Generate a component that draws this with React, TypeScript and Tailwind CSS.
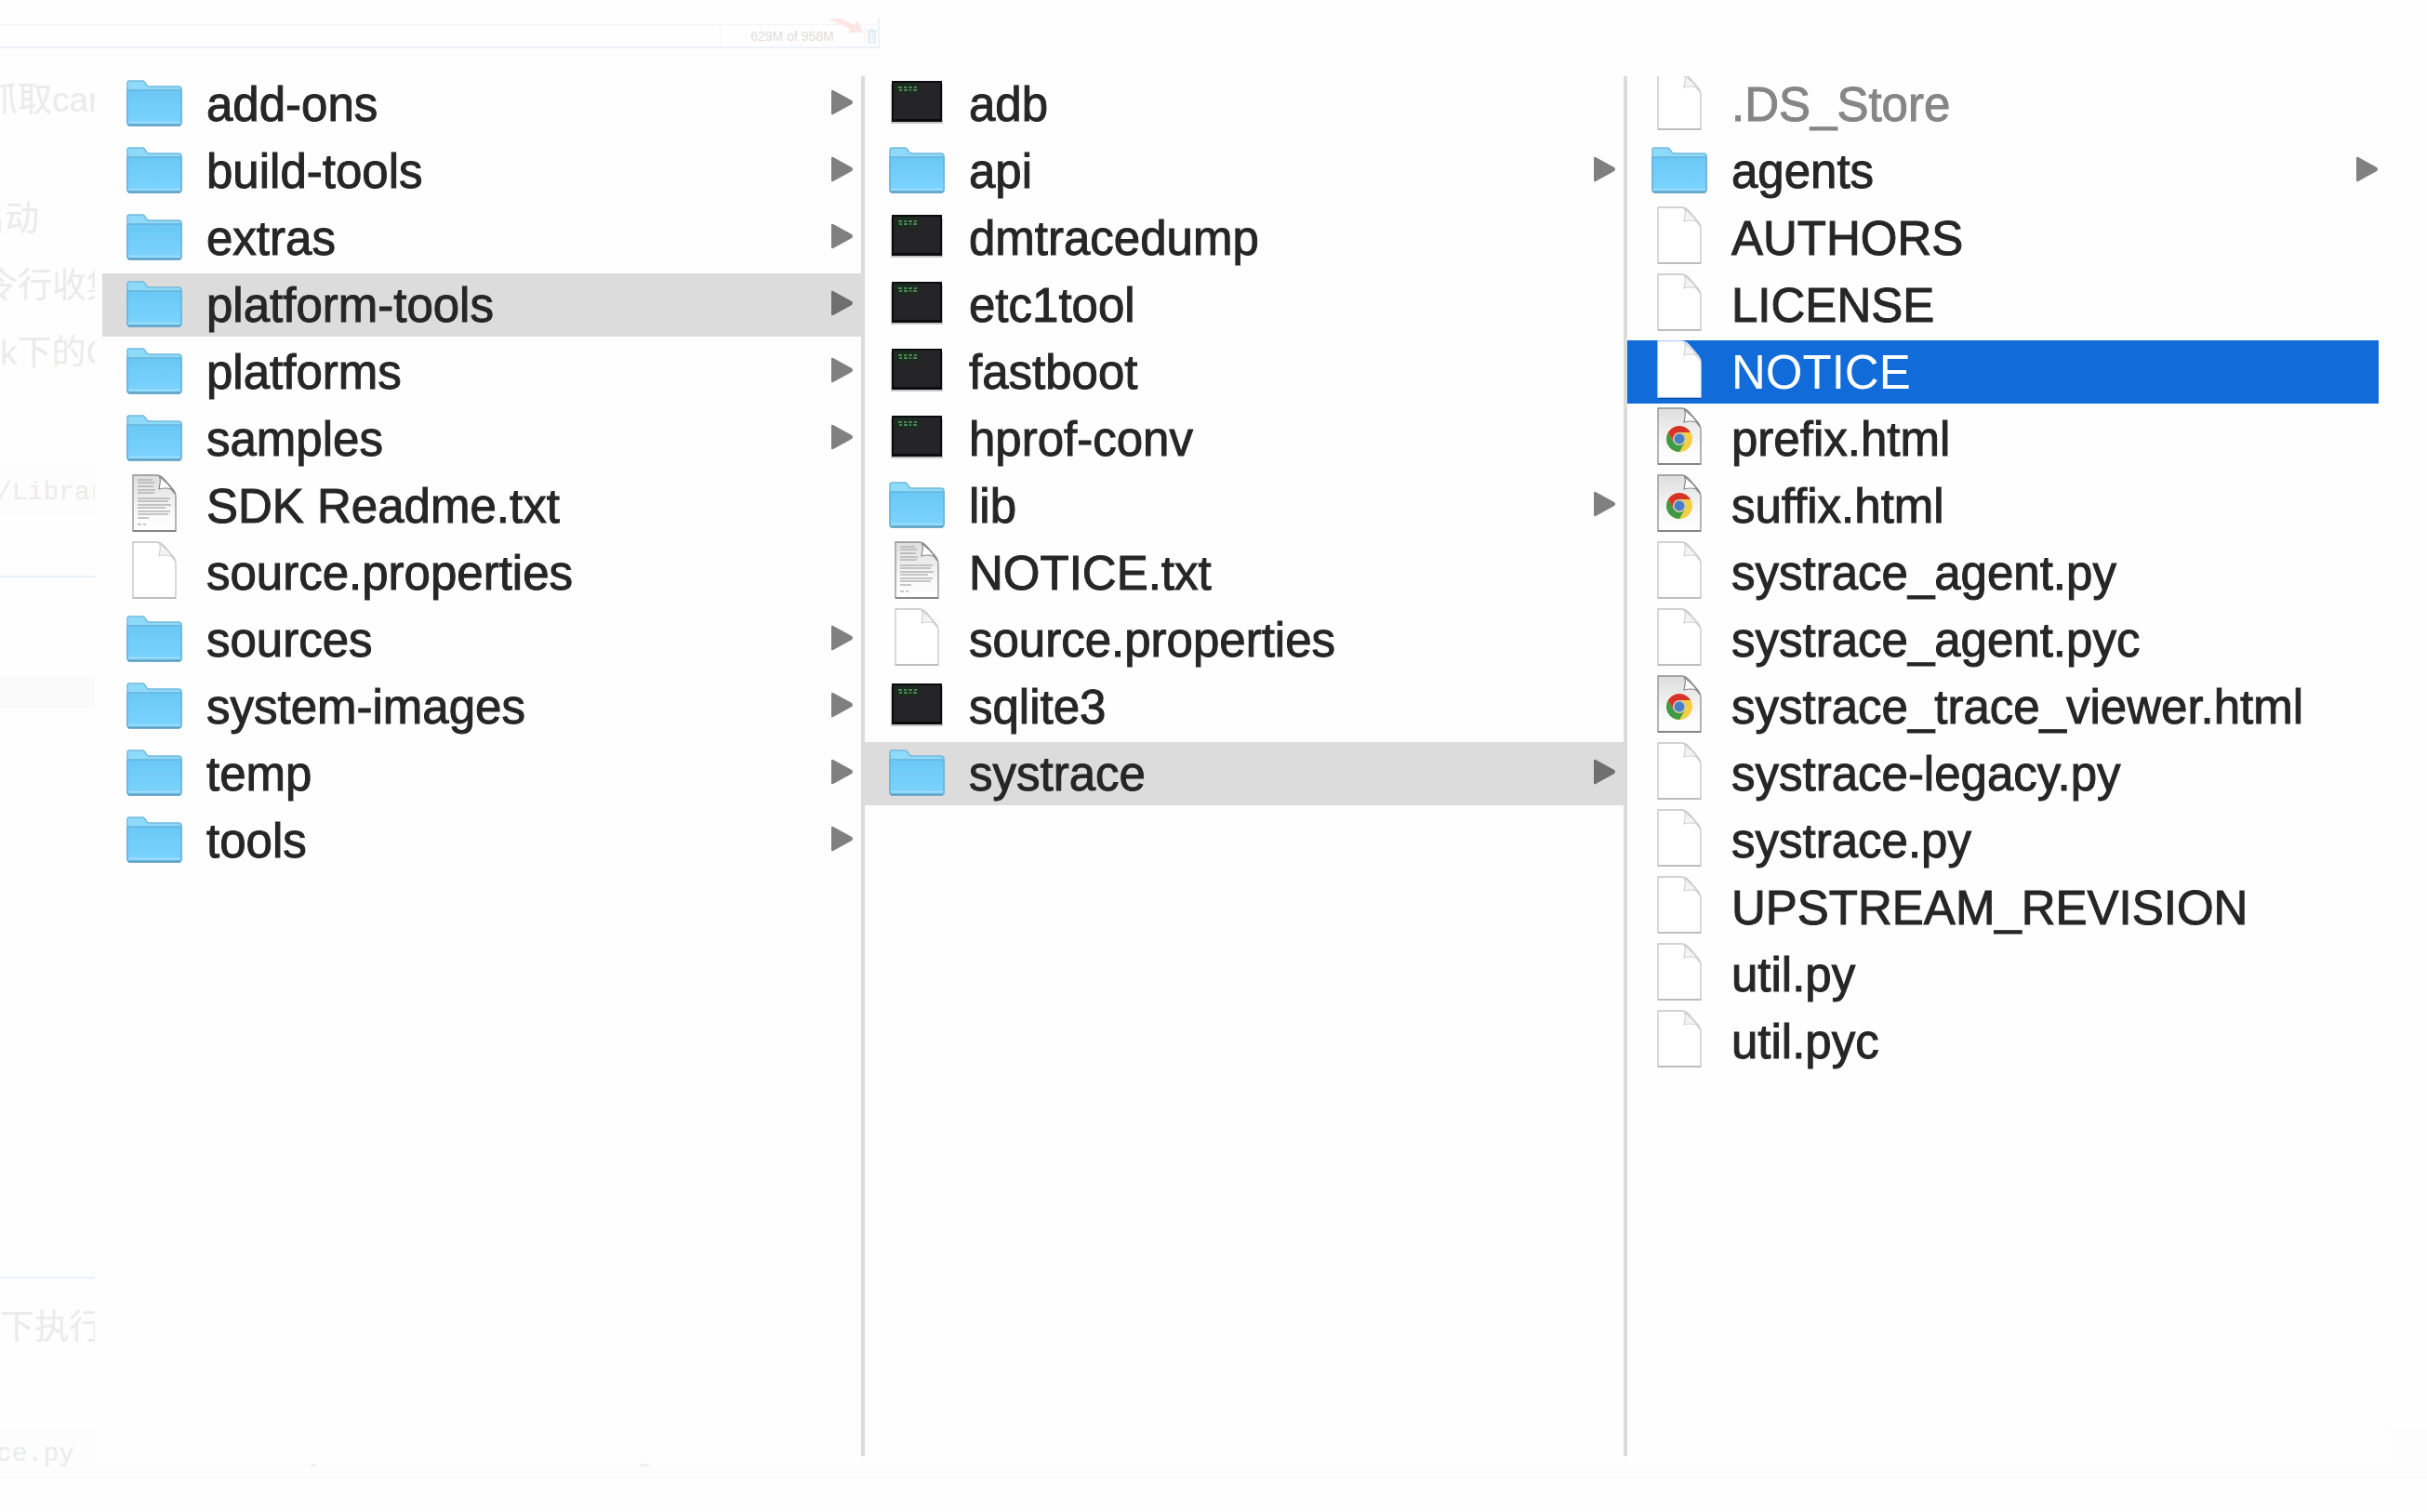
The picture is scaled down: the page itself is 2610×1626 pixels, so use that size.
import React, { useState } from "react";

type Kind = "folder" | "exec" | "doc" | "text" | "chrome";
type Entry = { name: string; kind: Kind; dim?: boolean };

const f = (name: string): Entry => ({ name, kind: "folder" });
const x = (name: string): Entry => ({ name, kind: "exec" });
const d = (name: string): Entry => ({ name, kind: "doc" });
const t = (name: string): Entry => ({ name, kind: "text" });
const h = (name: string): Entry => ({ name, kind: "chrome" });

const sdk: Entry[] = [
  f("add-ons"), f("build-tools"), f("extras"), f("platform-tools"), f("platforms"), f("samples"),
  t("SDK Readme.txt"), d("source.properties"), f("sources"), f("system-images"), f("temp"), f("tools"),
];
const platformTools: Entry[] = [
  x("adb"), f("api"), x("dmtracedump"), x("etc1tool"), x("fastboot"), x("hprof-conv"),
  f("lib"), t("NOTICE.txt"), d("source.properties"), x("sqlite3"), f("systrace"),
];
const systrace: Entry[] = [
  { name: ".DS_Store", kind: "doc", dim: true },
  f("agents"), d("AUTHORS"), d("LICENSE"), d("NOTICE"), h("prefix.html"), h("suffix.html"),
  d("systrace_agent.py"), d("systrace_agent.pyc"), h("systrace_trace_viewer.html"),
  d("systrace-legacy.py"), d("systrace.py"), d("UPSTREAM_REVISION"), d("util.py"), d("util.pyc"),
];

function FolderIcon() {
  return (
    <svg viewBox="0 0 60 68" className="h-[68px] w-[60px] shrink-0" aria-hidden="true">
      <defs>
        <linearGradient id="folder" x1="0" y1="0" x2="0" y2="1">
          <stop offset="0" stopColor="#6ac8f6" />
          <stop offset="1" stopColor="#7dd3fe" />
        </linearGradient>
      </defs>
      <path d="M1 54V11q0-2 2-2h14q2 0 3 2l2 3q1 1 3 1h31q3 0 3 3v36z" fill="#8ddafb" stroke="#74b9dc" strokeWidth="1.5" />
      <path d="M1 19h58v35q0 3-3 3H4q-3 0-3-3z" fill="url(#folder)" stroke="#69b2d8" strokeWidth="1.5" />
      <path d="M2 53.5h56" stroke="#a3e0fc" strokeWidth="1.5" />
      <path d="M2 56.5h56" stroke="#5f9dbd" strokeWidth="2" />
    </svg>
  );
}

function ExecIcon() {
  return (
    <svg viewBox="0 0 60 68" className="h-[68px] w-[60px] shrink-0" aria-hidden="true">
      <rect x="2" y="12" width="56" height="43" rx="1" fill="#000" opacity=".22" />
      <rect x="3" y="9" width="54" height="44" fill="#0c0c0e" />
      <rect x="5" y="11" width="50" height="39" fill="#252527" />
      <path d="M7 11h24v12H7z" fill="#1c2b1f" />
      <path d="M10 16h4M16 16h3M21 16h4M27 16h3M11 19h3M16 19h4M22 19h2M26 19h4" stroke="#4d8457" strokeWidth="2" />
    </svg>
  );
}

function Sheet({ kind, selected }: { kind: Kind; selected: boolean }) {
  const dark = kind !== "doc";
  const edge = selected ? "#e8f0fb" : dark ? "#8e8e8e" : "#c4c4c4";
  return (
    <svg viewBox="0 0 60 68" className="h-[68px] w-[60px] shrink-0" aria-hidden="true">
      <defs>
        <linearGradient id="shade" x1="0" y1="0" x2="0" y2="1">
          <stop offset="0" stopColor="#dedede" />
          <stop offset="0.7" stopColor="#fafafa" />
          <stop offset="1" stopColor="#fff" />
        </linearGradient>
      </defs>
      {selected && <path d="M8 61h45v2H8z" fill="#08479c" />}
      <path d="M7 1h26q4 0 9 6l6 7q5 5 5 10v37H7z" fill={dark ? "url(#shade)" : "#fff"} stroke={edge} strokeWidth="1.3" />
      <path d="M35 2q2 3 1 8l-1 6q7-2 13 0l4 5q-3-6-8-11z" fill={dark ? "#fff" : "#f4f4f4"} stroke={dark ? "#8a8a8a" : "#d2d2d2"} strokeWidth="1.2" />
      {!selected && <path d="M7 61h46" stroke={dark ? "#858585" : "#bdbdbd"} strokeWidth="1.8" />}
      {kind === "text" && (
        <path
          d="M12 6h16M12 9h18M12 13h17M12 17h19M12 20h18M12 26h35M12 29h33M12 33h36M12 36h30M12 40h35M12 43h33M12 47h12M12 54h4M18 54h3"
          stroke="#b4b4b4" strokeWidth="1.4"
        />
      )}
      {kind === "chrome" && (
        <g>
          <circle cx="30" cy="34" r="14" fill="#f3cf45" />
          <path d="M17.9 27A14 14 0 0 0 30 48l6.1-10.5A7 7 0 0 1 23.900 37.5z" fill="#3f9a48" />
          <path d="M17.9 27A14 14 0 0 1 42.1 27H30a7 7 0 0 0-6.1 10.5z" fill="#d8322c" />
          <circle cx="30" cy="34" r="6.6" fill="#b9c6d8" />
          <circle cx="30" cy="34" r="5.4" fill="#4a7fc4" />
        </g>
      )}
    </svg>
  );
}

function Icon({ kind, selected }: { kind: Kind; selected: boolean }) {
  if (kind === "folder") return <FolderIcon />;
  if (kind === "exec") return <ExecIcon />;
  return <Sheet kind={kind} selected={selected} />;
}

function Column({ label, entries, initial, last }: { label: string; entries: Entry[]; initial: string; last?: boolean }) {
  const [current, setCurrent] = useState(initial);
  return (
    <ul aria-label={label} className={last ? "-mt-1 flex min-w-0 flex-col gap-1" : "-mt-1 flex min-w-0 flex-col gap-1 border-r-4 border-[#dcdcdc]"}>
      {entries.map((e) => {
        const on = e.name === current;
        const tone = on ? (last ? "bg-[#116bd8] text-white" : "bg-[#dcdcdc] text-[#262626]") : e.dim ? "text-[#868686]" : "text-[#262626]";
        return (
          <li key={e.name}>
            <button
              type="button"
              aria-pressed={on}
              onClick={() => setCurrent(e.name)}
              className={`flex h-[68px] w-full items-center gap-[26px] pl-[26px] text-left text-[51px] leading-[68px] ${last ? "pr-0" : "pr-2"} ${tone}`}
            >
              <Icon kind={e.kind} selected={on && !!last} />
              <span className={on && last ? "flex-1 pt-0.5 whitespace-nowrap" : "flex-1 pt-0.5 whitespace-nowrap [-webkit-text-stroke:1px_currentColor]"}>{e.name}</span>
              {e.kind === "folder" && (
                <svg viewBox="0 0 24 68" className="h-[68px] w-6 shrink-0" aria-hidden="true">
                  <path d="M0 20q0-2 2-1l20 11q2 2 0 4L2 45q-2 1-2-1z" fill={on ? "#6f6f6f" : "#808080"} />
                </svg>
              )}
            </button>
          </li>
        );
      })}
    </ul>
  );
}

function MemoryBar() {
  return (
    <div className="relative mt-5 flex h-8 w-[946px] shrink-0 items-end border-r-2 border-b-2 border-[#eaf3fb]">
      <div className="flex h-6 w-full items-center justify-end border-t border-[#f0f5f8]">
        <div className="flex h-[22px] w-[156px] items-center justify-center border-x border-[#f6f4ee] text-[14px] leading-5 text-[#e0dedc]">
          629M of 958M
        </div>
        <svg viewBox="0 0 14 20" className="h-5 w-[14px]">
          <path d="M4 5h7v12H4zM2 4h11M6 2h3M6 7v8M9 7v8" fill="none" stroke="#dcebf0" strokeWidth="1.5" />
        </svg>
      </div>
      <svg viewBox="0 0 40 16" className="absolute top-0 right-4 h-4 w-10">
        <path d="M2 0h15l14 7 3-5 6 13H24l2-4z" fill="#fde6e5" />
      </svg>
    </div>
  );
}

function PageBehind() {
  return (
    <div aria-hidden="true" className="absolute inset-0 flex flex-col overflow-hidden text-[37px] leading-[72px] text-[#ebebeb]">
      <MemoryBar />
      <div className="flex w-[102px] flex-col overflow-hidden whitespace-nowrap">
        <p className="mt-5 -ml-[18px]">抓取camera</p>
        <p className="mt-14 -ml-8">启动</p>
        <p className="-ml-[18px]">令行收集</p>
        <p>k下的Chrome</p>
        <pre className="mt-[87px] -ml-1 h-[52px] border-y border-[#fafafa] bg-[#fdfdfd] font-['Liberation_Mono',monospace] text-[28px] leading-[52px]">/Library</pre>
        <div className="mt-16 h-0.5 bg-[#e8f2fb]" />
        <div className="mt-[106px] h-[35px] bg-[#fafafa]" />
        <div className="mt-[611px] h-0.5 bg-[#e8f2fb]" />
        <p className="mt-[17px]">下执行</p>
      </div>
      <pre className="mt-[72px] h-[53px] border-y border-[#fafafa] bg-[#fdfdfd] font-['Liberation_Mono',monospace] text-[28px] leading-[53px]">
        <span className="-ml-1">ce.py --time=10 -o mynewtrace.html sched gfx view wm</span>
      </pre>
    </div>
  );
}

export default function App() {
  return (
    <main className="relative flex min-h-screen overflow-hidden bg-[#fefefe] font-['Liberation_Sans','Noto_Sans_CJK_SC',sans-serif]">
      <PageBehind />
      <section aria-label="Files" className="relative mt-[74px] mr-11 mb-[52px] ml-[102px] flex flex-1 bg-[#fefefe] p-2">
        <div className="grid min-w-0 flex-1 grid-cols-[820fr_820fr_808fr] overflow-hidden">
          <Column label="sdk" entries={sdk} initial="platform-tools" />
          <Column label="platform-tools" entries={platformTools} initial="systrace" />
          <Column label="systrace" entries={systrace} initial="NOTICE" last />
        </div>
      </section>
    </main>
  );
}
